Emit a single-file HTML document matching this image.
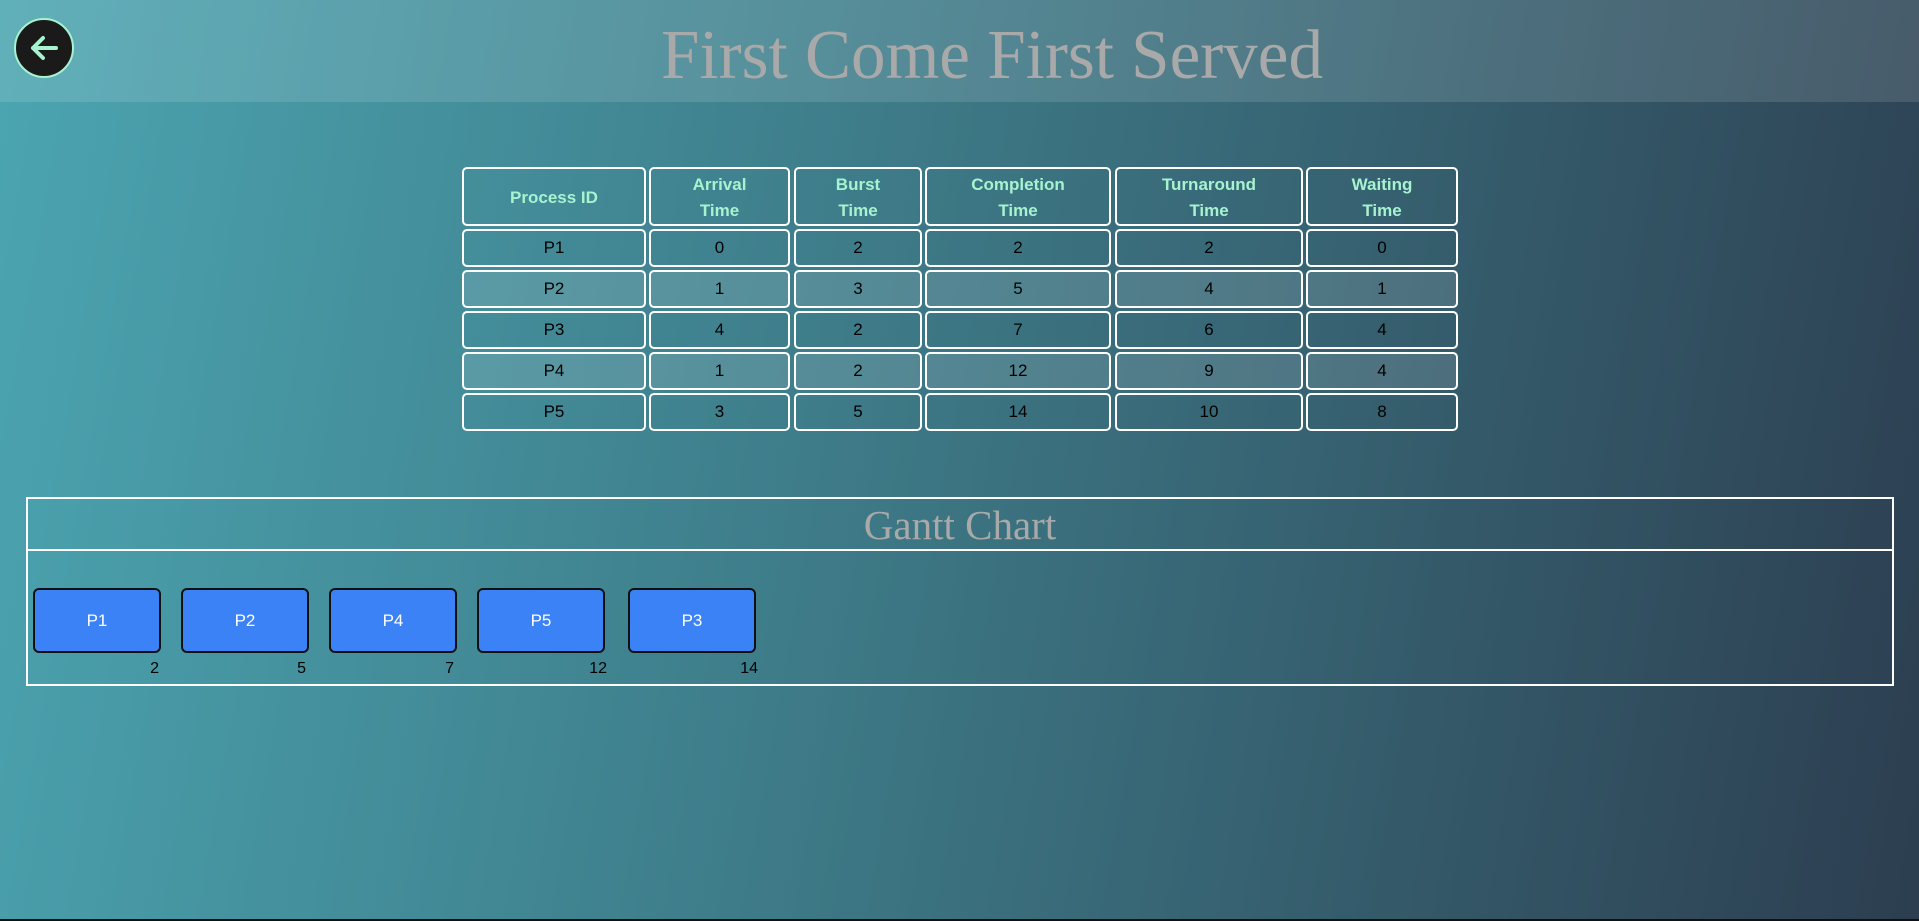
<!DOCTYPE html>
<html><head><meta charset="utf-8"><style>
*{margin:0;padding:0;box-sizing:border-box}
html,body{width:1919px;height:921px;overflow:hidden}
body{background:linear-gradient(100deg,#4ba5b1 0%,#3f7f8c 40%,#2c3e50 100%);font-family:"Liberation Sans",sans-serif;position:relative}
.hdr{position:absolute;left:0;top:0;width:1919px;height:102px;background:rgba(255,255,255,0.12)}
.back{position:absolute;left:14px;top:18px;width:60px;height:60px;border-radius:50%;background:#1a1a1a;border:2px solid #a7f3d0}
.cell{position:absolute;border:2px solid #fff;border-radius:5px;display:flex;align-items:center;justify-content:center;text-align:center;font-size:17px;color:#000}
.h{color:#a7f3d0;font-weight:bold;line-height:26px;padding-top:3px}
.alt{background:rgba(255,255,255,0.12)}
.gantt{position:absolute;left:26px;top:497px;width:1868px;height:189px;border:2px solid #fff}
.gline{position:absolute;left:26px;top:549px;width:1868px;height:2px;background:#fff}
.gt{position:absolute;left:26px;top:500px;width:1868px;height:50px;text-align:center;font-family:"Liberation Serif",serif;font-size:41px;line-height:50px;color:#a9a9a9}
.box{position:absolute;top:588px;width:128px;height:65px;background:#3b82f6;border:2px solid #111;border-radius:6px;color:#fff;font-size:17px;display:flex;align-items:center;justify-content:center}
.lbl{position:absolute;top:660px;font-size:16px;color:#000;text-align:right;width:60px}
</style></head><body>
<div class="hdr"></div>
<div class="back"><svg width="56" height="56" viewBox="0 0 56 56"><path d="M40 28H17M27 18l-10 10 10 10" stroke="#a7f3d0" stroke-width="4" fill="none" stroke-linecap="round" stroke-linejoin="round"/></svg></div>
<svg style="position:absolute;left:0;top:0" width="1919" height="102"><text x="661" y="78" textLength="662" lengthAdjust="spacingAndGlyphs" font-family="Liberation Serif,serif" font-size="70" fill="#a9a9a9">First Come First Served</text></svg>

<div class="cell h" style="left:462px;top:167px;width:184px;height:59px">Process ID</div>
<div class="cell h" style="left:649px;top:167px;width:141px;height:59px">Arrival<br>Time</div>
<div class="cell h" style="left:794px;top:167px;width:128px;height:59px">Burst<br>Time</div>
<div class="cell h" style="left:925px;top:167px;width:186px;height:59px">Completion<br>Time</div>
<div class="cell h" style="left:1115px;top:167px;width:188px;height:59px">Turnaround<br>Time</div>
<div class="cell h" style="left:1306px;top:167px;width:152px;height:59px">Waiting<br>Time</div>

<div class="cell" style="left:462px;top:229px;width:184px;height:38px">P1</div>
<div class="cell" style="left:649px;top:229px;width:141px;height:38px">0</div>
<div class="cell" style="left:794px;top:229px;width:128px;height:38px">2</div>
<div class="cell" style="left:925px;top:229px;width:186px;height:38px">2</div>
<div class="cell" style="left:1115px;top:229px;width:188px;height:38px">2</div>
<div class="cell" style="left:1306px;top:229px;width:152px;height:38px">0</div>

<div class="cell alt" style="left:462px;top:270px;width:184px;height:38px">P2</div>
<div class="cell alt" style="left:649px;top:270px;width:141px;height:38px">1</div>
<div class="cell alt" style="left:794px;top:270px;width:128px;height:38px">3</div>
<div class="cell alt" style="left:925px;top:270px;width:186px;height:38px">5</div>
<div class="cell alt" style="left:1115px;top:270px;width:188px;height:38px">4</div>
<div class="cell alt" style="left:1306px;top:270px;width:152px;height:38px">1</div>

<div class="cell" style="left:462px;top:311px;width:184px;height:38px">P3</div>
<div class="cell" style="left:649px;top:311px;width:141px;height:38px">4</div>
<div class="cell" style="left:794px;top:311px;width:128px;height:38px">2</div>
<div class="cell" style="left:925px;top:311px;width:186px;height:38px">7</div>
<div class="cell" style="left:1115px;top:311px;width:188px;height:38px">6</div>
<div class="cell" style="left:1306px;top:311px;width:152px;height:38px">4</div>

<div class="cell alt" style="left:462px;top:352px;width:184px;height:38px">P4</div>
<div class="cell alt" style="left:649px;top:352px;width:141px;height:38px">1</div>
<div class="cell alt" style="left:794px;top:352px;width:128px;height:38px">2</div>
<div class="cell alt" style="left:925px;top:352px;width:186px;height:38px">12</div>
<div class="cell alt" style="left:1115px;top:352px;width:188px;height:38px">9</div>
<div class="cell alt" style="left:1306px;top:352px;width:152px;height:38px">4</div>

<div class="cell" style="left:462px;top:393px;width:184px;height:38px">P5</div>
<div class="cell" style="left:649px;top:393px;width:141px;height:38px">3</div>
<div class="cell" style="left:794px;top:393px;width:128px;height:38px">5</div>
<div class="cell" style="left:925px;top:393px;width:186px;height:38px">14</div>
<div class="cell" style="left:1115px;top:393px;width:188px;height:38px">10</div>
<div class="cell" style="left:1306px;top:393px;width:152px;height:38px">8</div>

<div class="gantt"></div>
<div class="gline"></div>
<div class="gt">Gantt Chart</div>
<div class="box" style="left:33px">P1</div>
<div class="box" style="left:181px">P2</div>
<div class="box" style="left:329px">P4</div>
<div class="box" style="left:477px">P5</div>
<div class="box" style="left:628px">P3</div>
<div class="lbl" style="left:99px">2</div>
<div class="lbl" style="left:246px">5</div>
<div class="lbl" style="left:394px">7</div>
<div class="lbl" style="left:547px">12</div>
<div class="lbl" style="left:698px">14</div>
<div style="position:absolute;left:0;top:919px;width:1919px;height:2px;background:#111"></div>
</body></html>
